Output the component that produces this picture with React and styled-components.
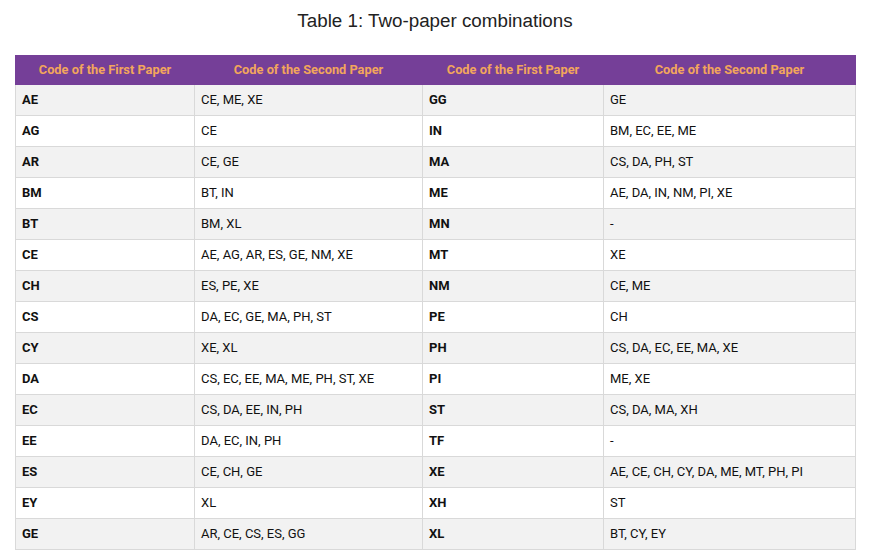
import React from "react";
import styled, { createGlobalStyle } from "styled-components";

const rows = [
  ["AE", "CE, ME, XE", "GG", "GE"],
  ["AG", "CE", "IN", "BM, EC, EE, ME"],
  ["AR", "CE, GE", "MA", "CS, DA, PH, ST"],
  ["BM", "BT, IN", "ME", "AE, DA, IN, NM, PI, XE"],
  ["BT", "BM, XL", "MN", "-"],
  ["CE", "AE, AG, AR, ES, GE, NM, XE", "MT", "XE"],
  ["CH", "ES, PE, XE", "NM", "CE, ME"],
  ["CS", "DA, EC, GE, MA, PH, ST", "PE", "CH"],
  ["CY", "XE, XL", "PH", "CS, DA, EC, EE, MA, XE"],
  ["DA", "CS, EC, EE, MA, ME, PH, ST, XE", "PI", "ME, XE"],
  ["EC", "CS, DA, EE, IN, PH", "ST", "CS, DA, MA, XH"],
  ["EE", "DA, EC, IN, PH", "TF", "-"],
  ["ES", "CE, CH, GE", "XE", "AE, CE, CH, CY, DA, ME, MT, PH, PI"],
  ["EY", "XL", "XH", "ST"],
  ["GE", "AR, CE, CS, ES, GG", "XL", "BT, CY, EY"],
];

const GlobalStyle = createGlobalStyle`
  body {
    margin: 0;
    background: #ffffff;
    font-family: Roboto, "Liberation Sans", Arial, sans-serif;
  }
`;

const Page = styled.div`
  width: 874px;
  height: 559px;
  overflow: hidden;
  box-sizing: border-box;
  padding: 0 19px 0 15px;
`;

const Caption = styled.h2`
  margin: 0;
  padding: 9px 0 0;
  height: 55px;
  box-sizing: border-box;
  text-align: center;
  font-family: "Liberation Sans", Arial, sans-serif;
  font-weight: 400;
  font-size: 18.8px;
  line-height: 24px;
  color: #222222;
`;

const Table = styled.table`
  width: 100%;
  border-collapse: collapse;
  table-layout: fixed;
  font-size: 13px;
  color: #111111;
`;

const HeadCell = styled.th`
  background: #753f98;
  color: #f2a65c;
  font-weight: 700;
  font-size: 12.8px;
  line-height: 18px;
  height: 29px;
  box-sizing: border-box;
  padding: 0 6px;
  text-align: center;
  border: 1px solid #753f98;
  border-left-color: #e9e2ee;
  &:first-child {
    border-left-color: #753f98;
  }
`;

const Row = styled.tr`
  background: ${(p) => (p.$striped ? "#f2f2f2" : "#ffffff")};
`;

const Cell = styled.td`
  border: 1px solid #d9d9d9;
  padding: 6px 6px 6px 6px;
  line-height: 18px;
  font-weight: ${(p) => (p.$code ? 700 : 400)};
  text-align: left;
  white-space: nowrap;
`;

const App = () => {
  return (
    <Page>
      <GlobalStyle />
      <Caption>Table 1: Two-paper combinations</Caption>
      <Table>
        <colgroup>
          <col style={{ width: "179px" }} />
          <col style={{ width: "228px" }} />
          <col style={{ width: "181px" }} />
          <col style={{ width: "252px" }} />
        </colgroup>
        <thead>
          <tr>
            <HeadCell>Code of the First Paper</HeadCell>
            <HeadCell>Code of the Second Paper</HeadCell>
            <HeadCell>Code of the First Paper</HeadCell>
            <HeadCell>Code of the Second Paper</HeadCell>
          </tr>
        </thead>
        <tbody>
          {rows.map((r, i) => (
            <Row key={r[0]} $striped={i % 2 === 0}>
              <Cell $code>{r[0]}</Cell>
              <Cell>{r[1]}</Cell>
              <Cell $code>{r[2]}</Cell>
              <Cell>{r[3]}</Cell>
            </Row>
          ))}
        </tbody>
      </Table>
    </Page>
  );
};

export default App;
